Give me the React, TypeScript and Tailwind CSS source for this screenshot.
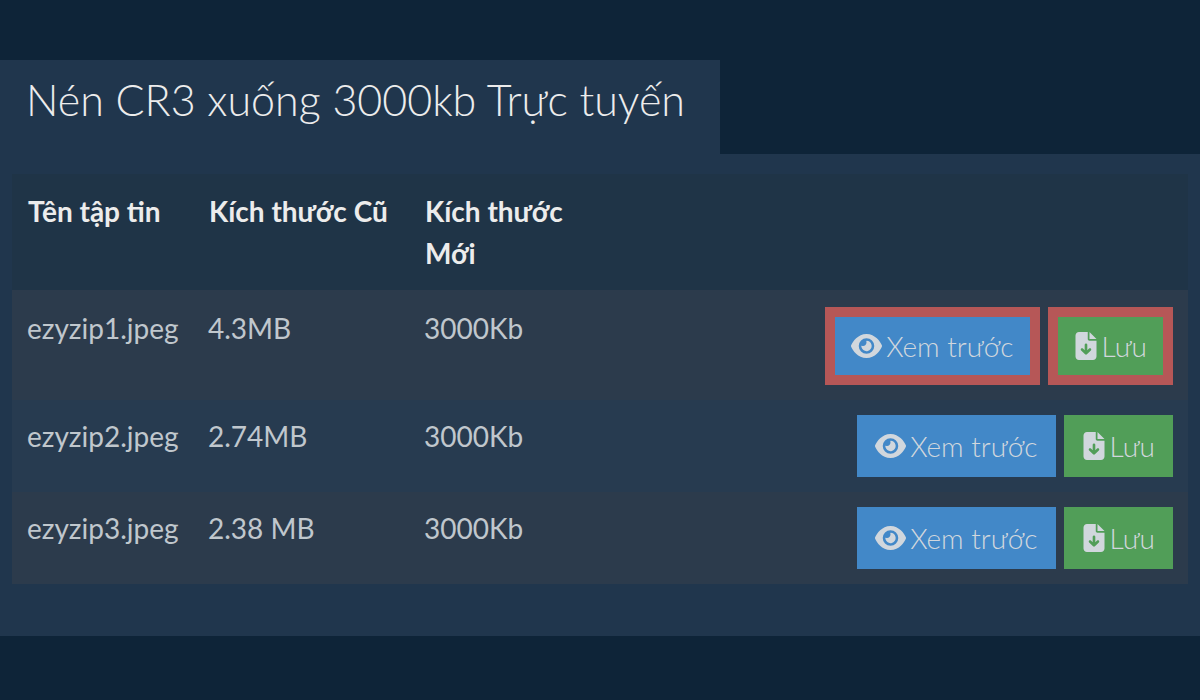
import { FaEye, FaFileArrowDown } from "react-icons/fa6"
import clsx from "clsx"

const files = [
  { name: "ezyzip1.jpeg", oldSize: "4.3MB", newSize: "3000Kb", highlighted: true },
  { name: "ezyzip2.jpeg", oldSize: "2.74MB", newSize: "3000Kb", highlighted: false },
  { name: "ezyzip3.jpeg", oldSize: "2.38 MB", newSize: "3000Kb", highlighted: false },
]

type FileRow = (typeof files)[number]

function RowActions({ highlighted }: { highlighted: boolean }) {
  const base = "flex items-center gap-1 px-4 py-2 font-light text-[#d1d7dd] whitespace-nowrap"

  return (
    <div className="flex justify-end gap-2">
      <button
        type="button"
        className={clsx(base, "bg-[#4288c8]", highlighted ? "border-10 border-[#b65757]" : "border-2 border-[#4288c8]")}
      >
        <FaEye className="w-[31px] h-7 shrink-0" />
        Xem trước
      </button>
      <button
        type="button"
        className={clsx(base, "bg-[#519e58]", highlighted ? "border-10 border-[#b65757]" : "border-2 border-[#519e58]")}
      >
        <FaFileArrowDown className="w-6 h-7 shrink-0" />
        Lưu
      </button>
    </div>
  )
}

function Row({ file }: { file: FileRow }) {
  return (
    <tr className="align-top odd:bg-[#2c3b4c] even:bg-[#273b50]">
      <td className="p-[15px]">{file.name}</td>
      <td className="p-[15px]">{file.oldSize}</td>
      <td className="p-[15px]">{file.newSize}</td>
      <td className="p-[15px]">
        <RowActions highlighted={file.highlighted} />
      </td>
    </tr>
  )
}

export default function App() {
  return (
    <main className="min-h-screen bg-[#0e2438] pt-15 pb-16 font-['Lato',sans-serif] text-[28px] leading-[42px] text-[#c0c7cd]">
      <div className="w-3/5 bg-[#20364d] px-[26px] pt-[10px] pb-6">
        <h1 className="text-[43px] leading-[60px] font-light whitespace-nowrap text-[#ececec]">
          Nén CR3 xuống 3000kb Trực tuyến
        </h1>
      </div>

      <section className="bg-[#20364d] px-3 pt-5 pb-[52px]">
        <table className="w-full table-fixed border-collapse">
          <colgroup>
            <col className="w-[181px]" />
            <col className="w-[216px]" />
            <col className="w-[190px]" />
            <col />
          </colgroup>
          <thead className="bg-[#1f3447] text-left align-top text-[#ececec]">
            <tr className="border-b-2 border-[#2c3b4c]">
              <th className="px-4 py-4 font-bold">Tên tập tin</th>
              <th className="px-4 py-4 font-bold">Kích thước Cũ</th>
              <th className="px-4 py-4 font-bold">Kích thước Mới</th>
              <td />
            </tr>
          </thead>
          <tbody>
            {files.map((file) => (
              <Row key={file.name} file={file} />
            ))}
          </tbody>
        </table>
      </section>
    </main>
  )
}
